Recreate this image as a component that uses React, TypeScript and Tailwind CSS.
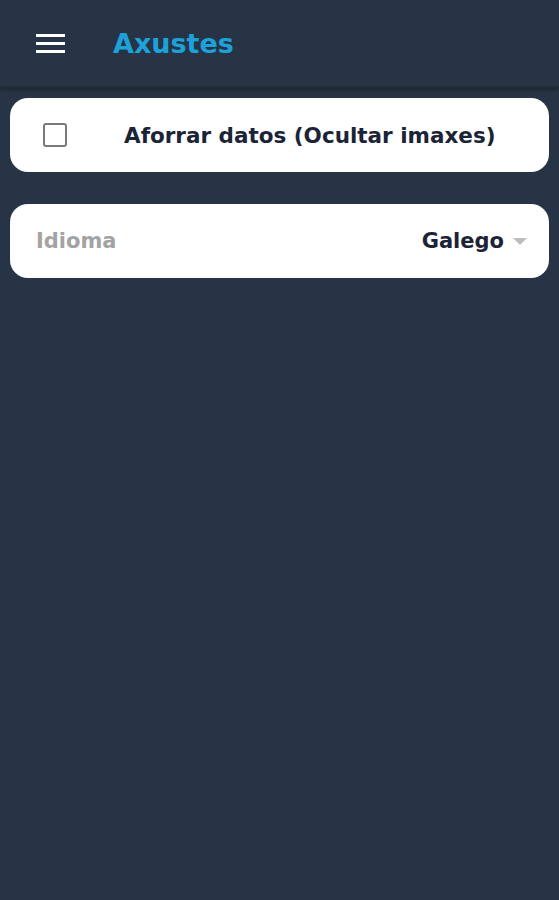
export default function App() {
  return (
    <div className="min-h-[900px] w-full bg-[#263445] font-['DejaVu_Sans',sans-serif]">
      {/* Top bar */}
      <header className="flex h-[88px] items-center border-b-2 border-[#1f2b39] shadow-[0_2px_3px_rgba(0,0,0,0.25)]">
        <button className="ml-[36px] flex w-[29px] flex-col gap-[5px]">
          <span className="h-[3px] w-full bg-white" />
          <span className="h-[3px] w-full bg-white" />
          <span className="h-[3px] w-full bg-white" />
        </button>
        <h1 className="ml-[48px] pt-[3px] text-[27px] font-bold text-[#1ea0da]">Axustes</h1>
      </header>

      <div className="flex flex-col gap-[32px] px-[10px] pt-[10px]">
        {/* Data saver */}
        <div className="flex h-[74px] items-center rounded-[18px] bg-white">
          <div className="ml-[33px] h-[24px] w-[24px] rounded-[3px] border-2 border-[#7a7a7a]" />
          <span className="ml-[57px] pt-[3px] text-[21.5px] font-bold text-[#1b2437]">Aforrar datos (Ocultar imaxes)</span>
        </div>

        {/* Language */}
        <div className="flex h-[74px] items-center rounded-[18px] bg-white pl-[26px] pr-[22px]">
          <span className="pt-[1px] text-[21px] font-bold text-[#a3a3a3]">Idioma</span>
          <span className="ml-auto pt-[1px] text-[21px] font-bold text-[#1b2437]">Galego</span>
          <svg className="ml-[9px]" width="14" height="7" viewBox="0 0 14 7">
            <path d="M0 0h14L7 7z" fill="#bdbdbd" />
          </svg>
        </div>
      </div>
    </div>
  );
}
